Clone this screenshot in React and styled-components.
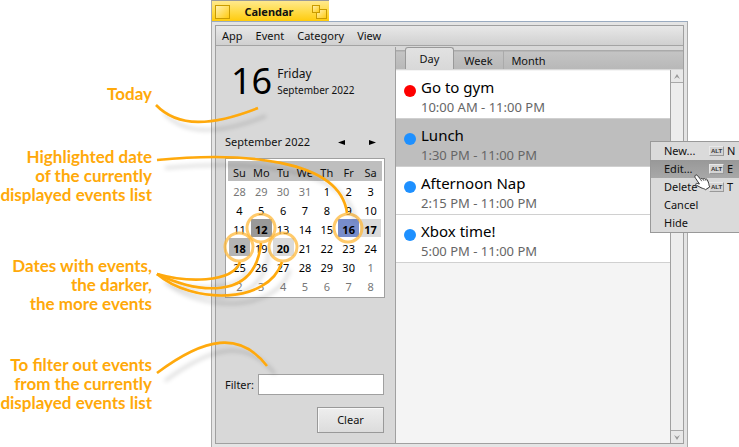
import React from "react";
import styled, { createGlobalStyle, css } from "styled-components";

const GlobalStyle = createGlobalStyle`
  * { box-sizing: border-box; }
  body {
    margin: 0;
    background: #fff;
    color: #111;
    font: 12px/16px "Noto Sans", "Open Sans", sans-serif;
  }
  button, input { font: inherit; color: inherit; }
`;

const Page = styled.div`
  position: relative;
  display: grid;
  grid-template-columns: 152px minmax(420px, 1fr);
  column-gap: 59px;
  min-height: 100vh;
  padding-right: 51px;
  overflow: hidden;
`;

const Notes = styled.aside`
  display: flex;
  flex-direction: column;
  align-items: flex-end;
  padding-top: 84px;
`;

const Note = styled.p`
  margin: 0 0 ${(p) => p.$after}px;
  color: #ffa90a;
  font: 700 17px/19px Lato, "Noto Sans", sans-serif;
  text-align: right;
  white-space: pre;
`;

const Window = styled.main`
  display: flex;
  flex-direction: column;
`;

const TitleTab = styled.header`
  display: flex;
  align-items: center;
  justify-content: space-between;
  width: 118px;
  height: 21px;
  padding: 2px 2px 0 3px;
  border-top: 1px solid #999;
  border-left: 1px solid #aaa;
  background: linear-gradient(#ffe98d, #ffdc4a 50%, #ffcb0d);
`;

const Title = styled.h1`
  margin: 0;
  padding-right: 4px;
  font-size: 11px;
  line-height: 18px;
`;

const TitleButton = styled.button`
  display: flex;
  padding: 0;
  border: 0;
  background: none;
`;

const Frame = styled.div`
  display: flex;
  flex: 1;
  padding: 3px;
  border: 1px solid #aaa;
  border-top-color: #9aabc0;
  border-bottom: 0;
  background: #e4e4e4;
`;

const Client = styled.div`
  display: flex;
  flex: 1;
  flex-direction: column;
  border: 1px solid #a0a0a0;
  background: #d8d8d8;
`;

const MenuBar = styled.nav`
  display: flex;
  gap: 13px;
  height: 20px;
  padding: 0 6px;
  border-bottom: 1px solid #a4a4a4;
  background: linear-gradient(#e8e8e8, #d0d0d0);
`;

const MenuName = styled.button`
  padding: 0;
  border: 0;
  background: none;
  font-size: 11px;
  line-height: 20px;
`;

const Body = styled.div`
  display: grid;
  flex: 1;
  grid-template-columns: 179px 1fr;
`;

const Side = styled.section`
  display: flex;
  flex-direction: column;
  padding: 15px 11px 10px 9px;
`;

const Today = styled.div`
  display: flex;
  gap: 5px;
  height: 40px;
  padding-left: 6px;
`;

const DayNumber = styled.strong`
  color: #000;
  font-size: 36px;
  font-weight: 400;
  line-height: 40px;
`;

const TodayText = styled.div`
  padding-top: 5px;
  line-height: 16px;
`;

const FullDate = styled.div`
  font-size: 10px;
`;

const MonthRow = styled.div`
  display: flex;
  align-items: center;
  margin-top: 33px;
  padding-right: 3px;
  height: 16px;
`;

const MonthLabel = styled.h2`
  flex: 1;
  margin: 0;
  font-size: 11px;
  font-weight: 400;
`;

const Arrow = styled.button`
  display: flex;
  margin-left: 14px;
  padding: 5px 5px;
  border: 0;
  background: none;
`;

const Month = styled.table`
  width: 160px;
  margin-top: 8px;
  border: 1px solid #a0a0a0;
  border-collapse: separate;
  border-spacing: 1px 1px;
  padding: 2px;
  background: #fff;
  table-layout: fixed;
  font-size: 11px;
  line-height: 14px;
  text-align: center;

  th, td { height: 18px; padding: 4px 0 0; }
  th { font-weight: 400; background: #bebebe; box-shadow: 0 0 0 1px #bebebe; }
`;

const shades = {
  dark: "#999",
  mid: "#b4b4b4",
  light: "#dadada",
  selected: "#788dcb",
};

const Day = styled.td`
  color: ${(p) => (p.$outside ? "#777" : "#000")};
  ${(p) => p.$shade && css`
    background: ${shades[p.$shade]};
    font-weight: 700;
  `}
`;

const Filter = styled.form`
  display: flex;
  flex-direction: column;
  align-items: flex-end;
  gap: 12px;
  margin-top: auto;
`;

const FilterRow = styled.div`
  display: flex;
  align-items: center;
  justify-content: space-between;
  align-self: stretch;
  font-size: 11px;
`;

const FilterInput = styled.input`
  width: 126px;
  height: 21px;
  padding: 0 4px;
  border: 1px solid #a0a0a0;
  border-radius: 0;
  background: #fff;
`;

const ClearButton = styled.button`
  width: 67px;
  height: 26px;
  padding: 0;
  border: 1px solid #999;
  border-radius: 0;
  background: linear-gradient(#eee, #dcdcdc);
  box-shadow: inset 1px 1px #f8f8f8;
  font-size: 11px;
`;

const Events = styled.section`
  display: flex;
  flex-direction: column;
  margin-top: 1px;
  border-left: 1px solid #a0a0a0;
`;

const Tabs = styled.div`
  display: flex;
  align-items: flex-end;
  height: 23px;
  padding-left: 9px;
  border-bottom: 1px solid #d8d8d8;
  background: linear-gradient(#d8d8d8 3px, #aaa 3px, #aaa 4px, #c4c4c4 5px, #b8b8b8);
`;

const Tab = styled.button`
  width: ${(p) => p.$width}px;
  height: 18px;
  padding: 0;
  border: 0;
  border-right: 1px solid ${(p) => (p.$last ? "transparent" : "#aaa")};
  background: none;
  font-size: 11px;
  line-height: 15px;

  ${(p) => p.$active && css`
    height: 22px;
    border: 1px solid #999;
    border-bottom: 0;
    border-radius: 3px 3px 0 0;
    background: linear-gradient(#e2e2e2, #d8d8d8);
    line-height: 20px;
  `}
`;

const Scroller = styled.div`
  display: grid;
  flex: 1;
  grid-template-columns: 1fr 13px;
  background: #f4f4f4;
`;

const List = styled.ul`
  margin: 0;
  padding: 1px 0 0;
  list-style: none;
`;

const EventRow = styled.li`
  display: grid;
  grid-template-columns: 12px 1fr;
  column-gap: 5px;
  height: 48px;
  padding: 6px 8px 0;
  border-bottom: 1px solid #d0d0d0;
  background: ${(p) => (p.$selected ? "#bebebe" : "#fff")};
`;

const Dot = styled.span`
  width: 12px;
  height: 12px;
  margin-top: 8px;
  border-radius: 50%;
  background: ${(p) => p.$color};
`;

const EventTitle = styled.div`
  color: #000;
  font-size: 15px;
  line-height: 20px;
`;

const EventTime = styled.div`
  color: #666;
  font-size: 13px;
  line-height: 21px;
`;

const ScrollBar = styled.div`
  display: flex;
  flex-direction: column;
  justify-content: space-between;
  border-left: 1px solid #a0a0a0;
  background: #ededed;
`;

const ScrollButton = styled.button`
  display: flex;
  align-items: center;
  justify-content: center;
  height: 13px;
  padding: 0;
  border: 0 solid #a8a8a8;
  border-width: ${(p) => (p.$down ? "1px 0 0" : "0 0 1px")};
  background: #e8e8e8;
`;

const PopupMenu = styled.div`
  position: absolute;
  top: 141px;
  right: 0;
  width: 89px;
  border: 1px solid #999;
  border-right: 0;
  background: #dadada;
`;

const PopupItem = styled.button`
  display: grid;
  grid-template-columns: 45px 15px 12px;
  align-items: center;
  width: 100%;
  height: 18px;
  padding: 0 0 0 13px;
  border: 0;
  background: ${(p) => (p.$active ? "linear-gradient(#989898, #a8a8a8)" : "none")};
  font-size: 11px;
  line-height: 18px;
  text-align: left;
`;

const AltKey = styled.kbd`
  display: block;
  width: 15px;
  height: 10px;
  border: 1px solid #aaa;
  border-color: #e8e8e8 #999 #999 #e8e8e8;
  background: #d4d4d4;
  color: #333;
  font: 700 6px/8px "Liberation Sans", sans-serif;
  text-align: center;
`;

const ShortcutKey = styled.span`
  padding-left: 3px;
`;

const Drawing = styled.svg`
  position: absolute;
  top: 0;
  left: 0;
  pointer-events: none;
`;

const Pointer = styled.svg`
  position: absolute;
  top: 174px;
  right: 28px;
  pointer-events: none;
`;

const weeks = [
  [28, 29, 30, 31, 1, 2, 3],
  [4, 5, 6, 7, 8, 9, 10],
  [11, 12, 13, 14, 15, 16, 17],
  [18, 19, 20, 21, 22, 23, 24],
  [25, 26, 27, 28, 29, 30, 1],
  [2, 3, 4, 5, 6, 7, 8],
];
const marked = { 12: "dark", 16: "selected", 17: "light", 18: "mid", 20: "light" };

const events = [
  { title: "Go to gym", time: "10:00 AM - 11:00 PM", color: "#fe0000" },
  { title: "Lunch", time: "1:30 PM - 11:00 PM", color: "#1e90ff", selected: true },
  { title: "Afternoon Nap", time: "2:15 PM - 11:00 PM", color: "#1e90ff" },
  { title: "Xbox time!", time: "5:00 PM - 11:00 PM", color: "#1e90ff" },
];

const commands = [["New...", "N"], ["Edit...", "E"], ["Delete", "T"], ["Cancel"], ["Hide"]];

const curves = [
  "M156 105C178 128 212 126 258 108",
  "M157 160C240 152 340 158 347 213",
  "M157 274C185 282 232 284 240 262",
  "M157 274C195 292 255 303 261 243",
  "M157 274C192 304 268 305 282 262",
  "M157 373C205 337 240 331 267 366",
];
const rings = [[261, 228], [348, 228], [239, 247], [283, 247]];

function Annotations() {
  return (
    <Drawing width="400" height="447" aria-hidden="true">
      <defs>
        <linearGradient id="shine" x2="1" y2="1">
          <stop stopColor="#fff3b8" />
          <stop offset="1" stopColor="#ffc90a" />
        </linearGradient>
        <filter id="soft" x="-20%" y="-60%" width="150%" height="260%">
          <feDropShadow dx="8" dy="8" stdDeviation="2" floodColor="#000" floodOpacity="0.16" />
        </filter>
      </defs>
      <g fill="none" stroke="#ffb83a" strokeOpacity="0.75" strokeWidth="3">
        {rings.map(([x, y]) => <circle key={x} cx={x} cy={y} r="14" />)}
      </g>
      <g fill="none" stroke="#ffa90a" strokeWidth="2.6" filter="url(#soft)">
        {curves.map((d) => <path key={d} d={d} />)}
      </g>
    </Drawing>
  );
}

function Triangle({ left }) {
  return (
    <svg width="7" height="5" aria-hidden="true">
      <path d={left ? "M0 2.5L7 0V5Z" : "M7 2.5L0 0V5Z"} fill="#000" />
    </svg>
  );
}

export default function App() {
  return (
    <Page>
      <GlobalStyle />
      <Notes>
        <Note $after={44}>Today</Note>
        <Note $after={52}>{"Highlighted date\nof the currently\ndisplayed events list"}</Note>
        <Note $after={42}>{"Dates with events,\nthe darker,\nthe more events"}</Note>
        <Note $after={0}>{"To filter out events\nfrom the currently\ndisplayed events list"}</Note>
      </Notes>

      <Window>
        <TitleTab>
          <TitleButton aria-label="Close">
            <svg width="15" height="14">
              <rect x=".5" y=".5" width="14" height="13" fill="url(#shine)" stroke="#c99b00" />
            </svg>
          </TitleButton>
          <Title>Calendar</Title>
          <TitleButton aria-label="Zoom">
            <svg width="15" height="14">
              <g fill="url(#shine)" stroke="#c99b00">
                <rect x="4.5" y="4.5" width="10" height="9" />
                <rect x=".5" y=".5" width="7" height="7" />
              </g>
            </svg>
          </TitleButton>
        </TitleTab>
        <Frame>
          <Client>
            <MenuBar>
              {["App", "Event", "Category", "View"].map((m) => <MenuName key={m}>{m}</MenuName>)}
            </MenuBar>
            <Body>
              <Side>
                <Today>
                  <DayNumber>16</DayNumber>
                  <TodayText>
                    Friday
                    <FullDate>September 2022</FullDate>
                  </TodayText>
                </Today>
                <MonthRow>
                  <MonthLabel>September 2022</MonthLabel>
                  <Arrow aria-label="Previous month"><Triangle left /></Arrow>
                  <Arrow aria-label="Next month"><Triangle /></Arrow>
                </MonthRow>
                <Month>
                  <thead>
                    <tr>{["Su", "Mo", "Tu", "We", "Th", "Fr", "Sa"].map((d) => <th key={d}>{d}</th>)}</tr>
                  </thead>
                  <tbody>
                    {weeks.map((week, w) => (
                      <tr key={w}>
                        {week.map((d) => {
                          const outside = (w === 0 && d > 20) || (w > 3 && d < 20);
                          return <Day key={d} $outside={outside} $shade={outside ? undefined : marked[d]}>{d}</Day>;
                        })}
                      </tr>
                    ))}
                  </tbody>
                </Month>
                <Filter onSubmit={(e) => e.preventDefault()}>
                  <FilterRow>
                    <label htmlFor="filter">Filter:</label>
                    <FilterInput id="filter" type="text" />
                  </FilterRow>
                  <ClearButton type="reset">Clear</ClearButton>
                </Filter>
              </Side>
              <Events>
                <Tabs role="tablist">
                  <Tab role="tab" aria-selected="true" $active $width={49}>Day</Tab>
                  <Tab role="tab" $width={50}>Week</Tab>
                  <Tab role="tab" $width={50} $last>Month</Tab>
                </Tabs>
                <Scroller>
                  <List>
                    {events.map((e) => (
                      <EventRow key={e.title} $selected={e.selected}>
                        <Dot $color={e.color} />
                        <div>
                          <EventTitle>{e.title}</EventTitle>
                          <EventTime>{e.time}</EventTime>
                        </div>
                      </EventRow>
                    ))}
                  </List>
                  <ScrollBar>
                    <ScrollButton aria-label="Scroll up">
                      <svg width="6" height="5"><path d="M0 5L3 0L6 5L3 3Z" fill="#999" /></svg>
                    </ScrollButton>
                    <ScrollButton aria-label="Scroll down" $down>
                      <svg width="6" height="5"><path d="M0 0L3 5L6 0L3 2Z" fill="#999" /></svg>
                    </ScrollButton>
                  </ScrollBar>
                </Scroller>
              </Events>
            </Body>
          </Client>
        </Frame>
      </Window>

      <Annotations />

      <PopupMenu role="menu">
        {commands.map(([name, key]) => (
          <PopupItem key={name} role="menuitem" $active={name === "Edit..."}>
            <span>{name}</span>
            {key && <AltKey>ALT</AltKey>}
            {key && <ShortcutKey>{key}</ShortcutKey>}
          </PopupItem>
        ))}
      </PopupMenu>
      <Pointer width="17" height="17" viewBox="0 0 17 17" aria-hidden="true">
        <path
          d="M1.5 1.2C2.5.4 3.4 1.4 4.2 2.4L6.5 5.2C7 4.3 8.3 4.2 8.9 5C9.6 4.2 10.7 4.4 11.2 5.2C12 4.7 13 5 13.4 6L14.7 9.2C15.1 10.5 14.8 11.3 15.8 12.9L11.5 15.7C10.3 14.5 8.6 14.6 7 13.7L2.4 11.2C1 10.3 1.9 9 3.2 9.4L5.4 10L1.6 4.3C.8 3.1.6 2 1.5 1.2Z"
          fill="#fff"
          stroke="#333"
        />
        <path d="M6.5 5.2L7.7 7.2M8.9 5L10 6.8M11.2 5.2L12 6.7" fill="none" stroke="#555" />
      </Pointer>
    </Page>
  );
}
